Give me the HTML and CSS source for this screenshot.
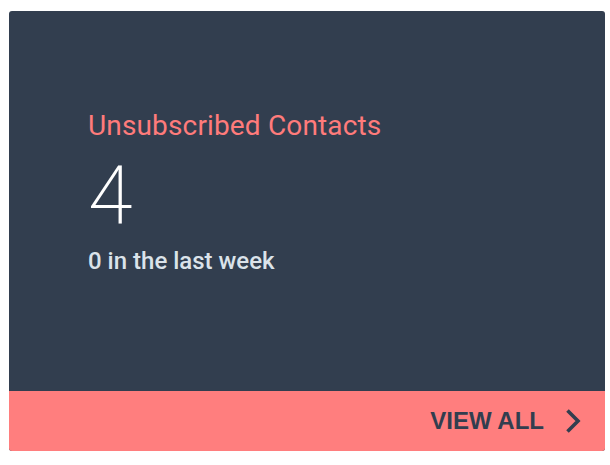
FILE: index.html
```html
<!DOCTYPE html>
<html lang="en">
<head>
<meta charset="utf-8">
<link rel="stylesheet" href="styles.css">
</head>
<body>
  <div class="card">
    <div class="card-body">
      <div class="title">Unsubscribed Contacts</div>
      <div class="count">4</div>
      <div class="sub">0 in the last week</div>
    </div>
    <div class="card-footer">
      <span class="view-all">VIEW ALL</span>
      <svg class="chevron" width="16" height="26" viewBox="0 0 16 26">
        <path d="M2.5 2.5 L13 13 L2.5 23.5" fill="none" stroke="#323e4f" stroke-width="3.6" stroke-linecap="butt" stroke-linejoin="miter"/>
      </svg>
    </div>
  </div>
</body>
</html>
```

FILE: styles.css
```css
html, body {
  margin: 0;
  padding: 0;
  background: #ffffff;
}
body {
  padding: 11px 5px 0 9px;
  font-family: Roboto, "Liberation Sans", sans-serif;
}
.card {
  width: 596px;
  height: 440px;
  border-radius: 3px;
  overflow: hidden;
  display: flex;
  flex-direction: column;
  background: #323e4f;
}
.card-body {
  flex: 1;
  padding: 98px 0 0 79px;
  box-sizing: border-box;
}
.title {
  font-size: 28px;
  line-height: 33px;
  font-weight: 400;
  letter-spacing: 0.15px;
  color: #ff7b7b;
}
.count {
  margin-top: 10px;
  font-size: 81px;
  line-height: 88px;
  font-weight: 200;
  color: #ffffff;
}
.sub {
  margin-top: 7px;
  font-size: 24px;
  line-height: 29px;
  font-weight: 500;
  color: #dbe3ea;
}
.card-footer {
  height: 60px;
  background: #ff7e7e;
  display: flex;
  align-items: center;
  justify-content: flex-end;
  padding-right: 24px;
  gap: 21px;
}
.view-all {
  font-family: "Liberation Sans", Arial, sans-serif;
  font-weight: 700;
  font-size: 24px;
  line-height: 28px;
  color: #323e4f;
}
.chevron {
  display: block;
}
```
